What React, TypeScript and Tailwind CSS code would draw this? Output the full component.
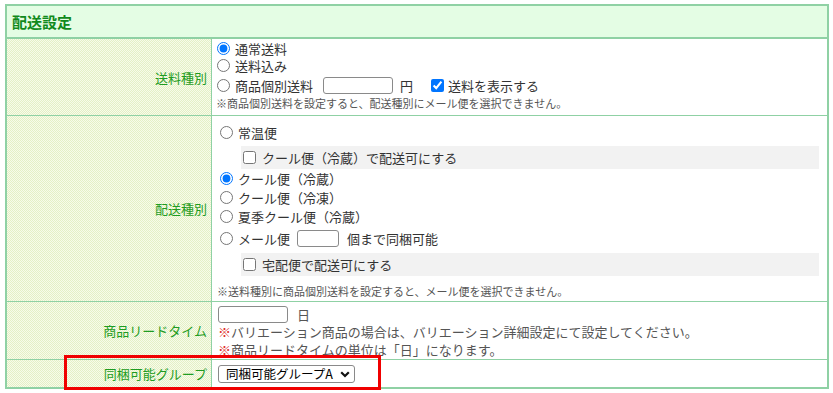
import React from 'react';

const labelBg =
  'bg-[conic-gradient(#e4f0c6_25%,#f7fbea_0_50%,#e4f0c6_0_75%,#f7fbea_0)] bg-[length:2px_2px]';

function Radio({ checked = false }: { checked?: boolean }) {
  return (
    <input
      type="radio"
      defaultChecked={checked}
      className="m-0 mr-[5px] h-[13px] w-[13px] shrink-0"
    />
  );
}

function Check({ checked = false }: { checked?: boolean }) {
  return (
    <input
      type="checkbox"
      defaultChecked={checked}
      className="m-0 h-[13px] w-[13px] shrink-0"
    />
  );
}

function Label({ children }: { children: React.ReactNode }) {
  return (
    <div
      className={`flex w-[205px] shrink-0 items-center justify-end border-r border-[#8fd1a4] pr-[4px] text-[13px] text-[#1f9c22] ${labelBg}`}
    >
      {children}
    </div>
  );
}

function GrayBox({ children }: { children: React.ReactNode }) {
  return (
    <div className="ml-[21px] mr-[8px] flex h-[23px] items-center bg-[#f2f2f2] pl-[2px]">
      <Check />
      <span className="ml-[6px]">{children}</span>
    </div>
  );
}

export default function App() {
  return (
    <div className="relative min-h-[393px] bg-white pl-[5px] pt-[4px] font-['Noto_Sans_CJK_JP',sans-serif] text-[13px] leading-[17px] text-[#333]">
      <div className="w-[824px] border-2 border-[#8fd1a4]">
        <div className="flex h-[33px] items-center border-b-2 border-[#8fd1a4] bg-[#e4fde4] pl-[5px] text-[15px] font-bold text-[#118a1c]">
          配送設定
        </div>

        {/* 送料種別 */}
        <div className="flex">
          <Label>送料種別</Label>
          <div className="flex-1 pb-[4px] pl-[5px] pt-px">
            <div className="flex h-[17px] items-center">
              <Radio checked />
              <span>通常送料</span>
            </div>
            <div className="flex h-[17px] items-center">
              <Radio />
              <span>送料込み</span>
            </div>
            <div className="flex h-[22px] items-center">
              <Radio />
              <span>商品個別送料</span>
              <input
                type="text"
                className="ml-[10px] h-[17px] w-[70px] rounded-[3px] border border-[#8a8a8a] bg-white"
              />
              <span className="ml-[7px]">円</span>
              <span className="ml-[18px] flex items-center">
                <Check checked />
              </span>
              <span className="ml-[4px]">送料を表示する</span>
            </div>
            <div className="-ml-px h-[15px] text-[11px] leading-[15px] text-[#555]">
              ※商品個別送料を設定すると、配送種別にメール便を選択できません。
            </div>
          </div>
        </div>

        {/* 配送種別 */}
        <div className="flex border-t border-[#8fd1a4]">
          <Label>配送種別</Label>
          <div className="flex-1 pb-[2px] pl-[8px] pt-[7px]">
            <div className="flex h-[19px] items-center">
              <Radio />
              <span>常温便</span>
            </div>
            <div className="mt-[4px]">
              <GrayBox>クール便（冷蔵）で配送可にする</GrayBox>
            </div>
            <div className="flex h-[19px] items-center">
              <Radio checked />
              <span>クール便（冷蔵）</span>
            </div>
            <div className="flex h-[19px] items-center">
              <Radio />
              <span>クール便（冷凍）</span>
            </div>
            <div className="flex h-[19px] items-center">
              <Radio />
              <span>夏季クール便（冷蔵）</span>
            </div>
            <div className="flex h-[24px] items-center">
              <Radio />
              <span>メール便</span>
              <input
                type="text"
                className="ml-[7px] h-[17px] w-[42px] rounded-[3px] border border-[#8a8a8a] bg-white"
              />
              <span className="ml-[8px]">個まで同梱可能</span>
            </div>
            <div className="mt-[3px]">
              <GrayBox>宅配便で配送可にする</GrayBox>
            </div>
            <div className="-ml-[3px] mt-[8px] h-[15px] text-[11px] leading-[15px] text-[#555]">
              ※送料種別に商品個別送料を設定すると、メール便を選択できません。
            </div>
          </div>
        </div>

        {/* 商品リードタイム */}
        <div className="flex border-t border-[#8fd1a4]">
          <Label>商品リードタイム</Label>
          <div className="flex-1 pl-[6px] pt-[3px] text-[#555]">
            <div className="flex h-[18px] items-center">
              <input
                type="text"
                className="h-[17px] w-[70px] rounded-[3px] border border-[#8a8a8a] bg-white"
              />
              <span className="ml-[9px]">日</span>
            </div>
            <div className="h-[18px] leading-[18px]">
              <span className="text-[#e0302a]">※</span>
              バリエーション商品の場合は、バリエーション詳細設定にて設定してください。
            </div>
            <div className="h-[18px] leading-[18px]">
              <span className="text-[#e0302a]">※</span>
              商品リードタイムの単位は「日」になります。
            </div>
          </div>
        </div>

        {/* 同梱可能グループ */}
        <div className="flex h-[28px] border-t border-[#8fd1a4]">
          <Label>同梱可能グループ</Label>
          <div className="flex flex-1 items-center pl-[6px]">
            <div className="relative flex items-center">
              <select className="h-[18px] w-[137px] appearance-none rounded-[3px] border border-[#8a8a8a] bg-white pl-[7px] text-[12.5px] leading-[16px] text-black">
                <option>同梱可能グループA</option>
              </select>
              <svg
                className="pointer-events-none absolute right-[5px] top-[6px]"
                width="10"
                height="7"
                viewBox="0 0 10 7"
              >
                <path d="M1.2 1.2 L5 5 L8.8 1.2" fill="none" stroke="#111" strokeWidth="2.2" />
              </svg>
            </div>
          </div>
        </div>
      </div>

      <div className="pointer-events-none absolute left-[64px] top-[355px] h-[35px] w-[317px] border-[3px] border-[#f00000]" />
    </div>
  );
}
